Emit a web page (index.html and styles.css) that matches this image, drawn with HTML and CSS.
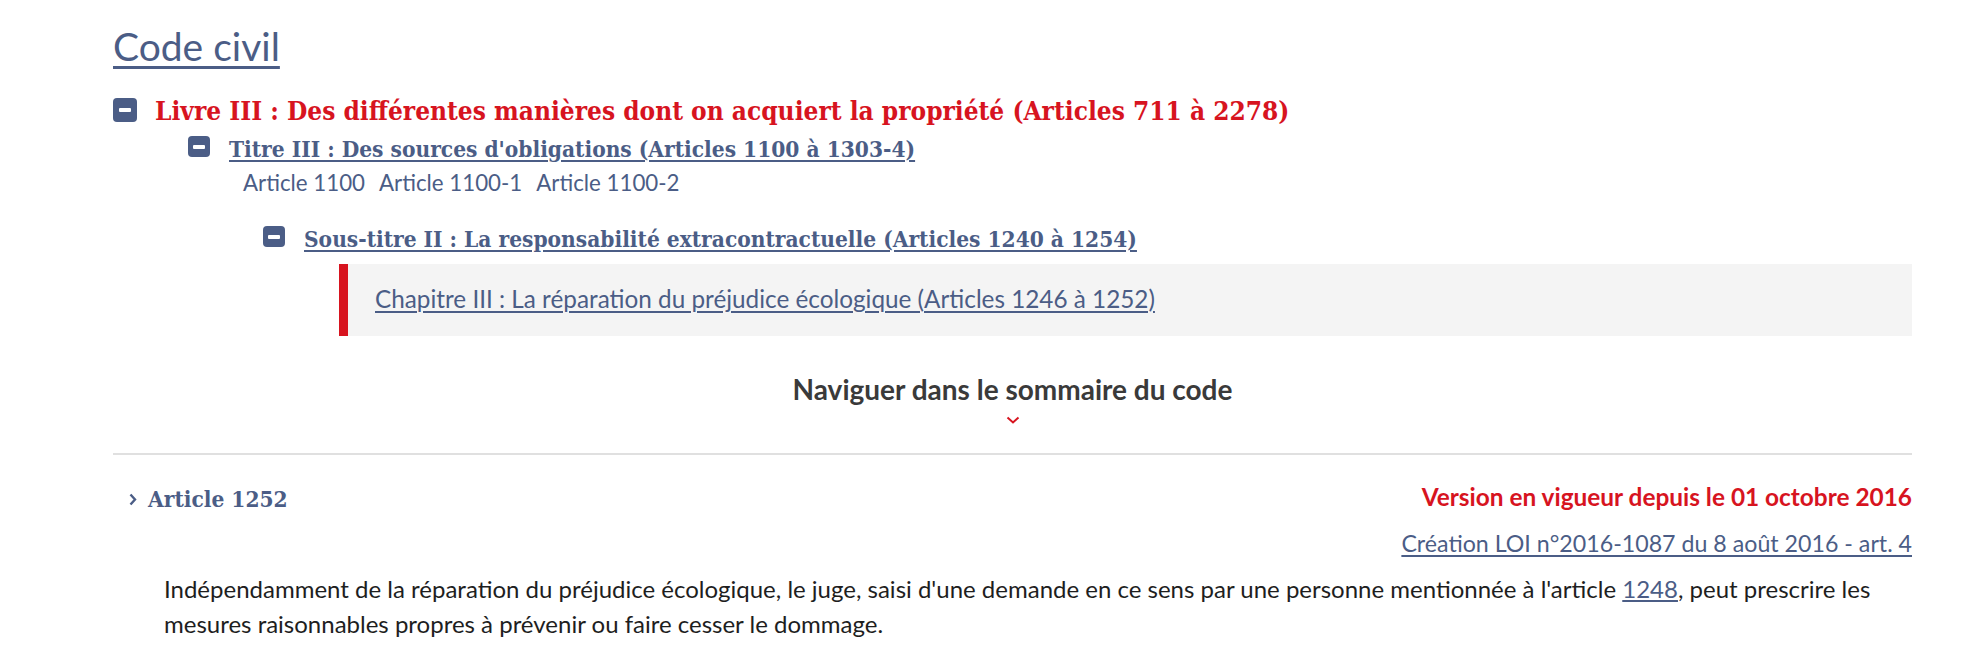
FILE: index.html
```html
<!DOCTYPE html>
<html lang="fr">
<head>
    <meta charset="UTF-8">
    <meta name="viewport" content="width=device-width, initial-scale=1.0">
    <title>Code civil - Article 1252</title>
    <link rel="stylesheet" href="styles.css">
</head>
<body>
    <main class="page">
        <h1 class="code-title"><a href="#">Code civil</a></h1>

        <ul class="toc">
            <li>
                <div class="toc-row level-1">
                    <span class="toggle"></span>
                    <a href="#" class="toc-link current">Livre III : Des différentes manières dont on acquiert la propriété (Articles 711 à 2278)</a>
                </div>
                <ul class="toc sub">
                    <li>
                        <div class="toc-row level-2">
                            <span class="toggle small"></span>
                            <a href="#" class="toc-link">Titre III : Des sources d'obligations (Articles 1100 à 1303-4)</a>
                        </div>
                        <div class="article-links">
                            <a href="#">Article 1100</a>
                            <a href="#">Article 1100-1</a>
                            <a href="#">Article 1100-2</a>
                        </div>
                        <ul class="toc sub">
                            <li>
                                <div class="toc-row level-3">
                                    <span class="toggle small"></span>
                                    <a href="#" class="toc-link">Sous-titre II : La responsabilité extracontractuelle (Articles 1240 à 1254)</a>
                                </div>
                                <div class="chapter-box">
                                    <a href="#">Chapitre III : La réparation du préjudice écologique (Articles 1246 à 1252)</a>
                                </div>
                            </li>
                        </ul>
                    </li>
                </ul>
            </li>
        </ul>

        <div class="summary-toggle">
            <span>Naviguer dans le sommaire du code</span>
            <svg class="chevron-down" width="14" height="10" viewBox="0 0 14 10">
                <path d="M1.5 2.5 L7 7.5 L12.5 2.5" fill="none" stroke="#d7141f" stroke-width="2"/>
            </svg>
        </div>

        <hr class="divider">

        <article class="article">
            <div class="article-header">
                <h2 class="article-title">
                    <svg width="8" height="13" viewBox="0 0 8 13">
                        <path d="M1.5 1.5 L6 6.5 L1.5 11.5" fill="none" stroke="#4b5d86" stroke-width="2.4"/>
                    </svg>
                    Article 1252
                </h2>
                <p class="version">Version en vigueur depuis le 01 octobre 2016</p>
            </div>
            <p class="origin"><a href="#">Création LOI n°2016-1087 du 8 août 2016 - art. 4</a></p>
            <div class="article-content">
                <p>Indépendamment de la réparation du préjudice écologique, le juge, saisi d'une demande en ce sens par une personne mentionnée à l'article <a href="#">1248</a>, peut prescrire les mesures raisonnables propres à prévenir ou faire cesser le dommage.</p>
            </div>
        </article>
    </main>
</body>
</html>
```

FILE: styles.css
```css
body {
    margin: 0;
    font-family: Lato, "Open Sans", sans-serif;
    color: #1e1e1e;
    background: #fff;
}

a {
    color: #4b5d86;
}

.page {
    padding: 22px 54px 0 113px;
}

.code-title {
    margin: 0;
    font-size: 39px;
    line-height: 48px;
    font-weight: 400;
}

.code-title a {
    text-decoration-thickness: 3px;
    text-underline-offset: 5px;
}

/* sommaire */

.toc {
    list-style: none;
    margin: 26px 0 0;
    padding: 0;
}

.toc.sub {
    margin: 0;
    padding-left: 75px;
}

.toc-row {
    display: flex;
    align-items: flex-start;
    font-family: "DejaVu Serif Condensed", "DejaVu Serif", serif;
    font-stretch: condensed;
    font-weight: 700;
}

.toggle {
    position: relative;
    flex: none;
    width: 24px;
    height: 24px;
    margin: 2px 18px 0 0;
    background: #4b5d86;
    border-radius: 4px;
}

.toggle::after {
    content: "";
    position: absolute;
    left: 6px;
    right: 6px;
    top: 50%;
    height: 4px;
    margin-top: -2px;
    background: #fff;
    border-radius: 1px;
}

.toggle.small {
    width: 22px;
    height: 21px;
    margin: 0 19px 0 0;
}

.toggle.small::after {
    left: 5px;
    right: 5px;
}

.level-1 {
    font-size: 26px;
    line-height: 30px;
}

.level-2 {
    margin-top: 10px;
    font-size: 22.5px;
    line-height: 26px;
}

.level-3 {
    margin-top: 29px;
    font-size: 22.5px;
    line-height: 26px;
}

.toc-link {
    text-decoration-thickness: 2px;
    text-underline-offset: 3px;
}

.toc-link.current {
    color: #d7141f;
    text-decoration: none;
}

.article-links {
    display: flex;
    gap: 14px;
    margin: 7px 0 0 55px;
    font-size: 22.3px;
    line-height: 28px;
}

.article-links a {
    text-decoration: none;
}

.chapter-box {
    margin: 12px 0 0 76px;
    padding: 20px 27px 22px;
    background: #f4f4f4;
    border-left: 9px solid #d7141f;
    font-size: 24.3px;
    line-height: 30px;
}

.chapter-box a {
    text-decoration-thickness: 2px;
    text-underline-offset: 3px;
}

/* navigation */

.summary-toggle {
    display: flex;
    flex-direction: column;
    align-items: center;
    margin-top: 38px;
    font-size: 28px;
    line-height: 30px;
    font-weight: 700;
    color: #3a3a3a;
}

.chevron-down {
    margin-top: 11px;
}

.divider {
    margin: 28px 0 0;
    border: none;
    border-top: 2px solid #e0e0e0;
}

/* article */

.article-header {
    display: flex;
    justify-content: space-between;
    align-items: flex-start;
    margin-top: 25px;
}

.article-title {
    display: flex;
    align-items: center;
    gap: 11px;
    margin: 4px 0 0;
    padding-left: 16px;
    font-family: "DejaVu Serif Condensed", "DejaVu Serif", serif;
    font-stretch: condensed;
    font-size: 22.5px;
    line-height: 30px;
    color: #4b5d86;
}

.version {
    margin: 3px 0 0;
    font-size: 24.4px;
    line-height: 28px;
    font-weight: 700;
    color: #d7141f;
}

.origin {
    margin: 15px 0 0;
    text-align: right;
    font-size: 23.2px;
    line-height: 28px;
}

.origin a {
    text-decoration-thickness: 2px;
    text-underline-offset: 3px;
}

.article-content {
    padding-left: 51px;
    margin-top: 14px;
}

.article-content p {
    margin: 0;
    font-size: 24px;
    line-height: 35px;
}
```
